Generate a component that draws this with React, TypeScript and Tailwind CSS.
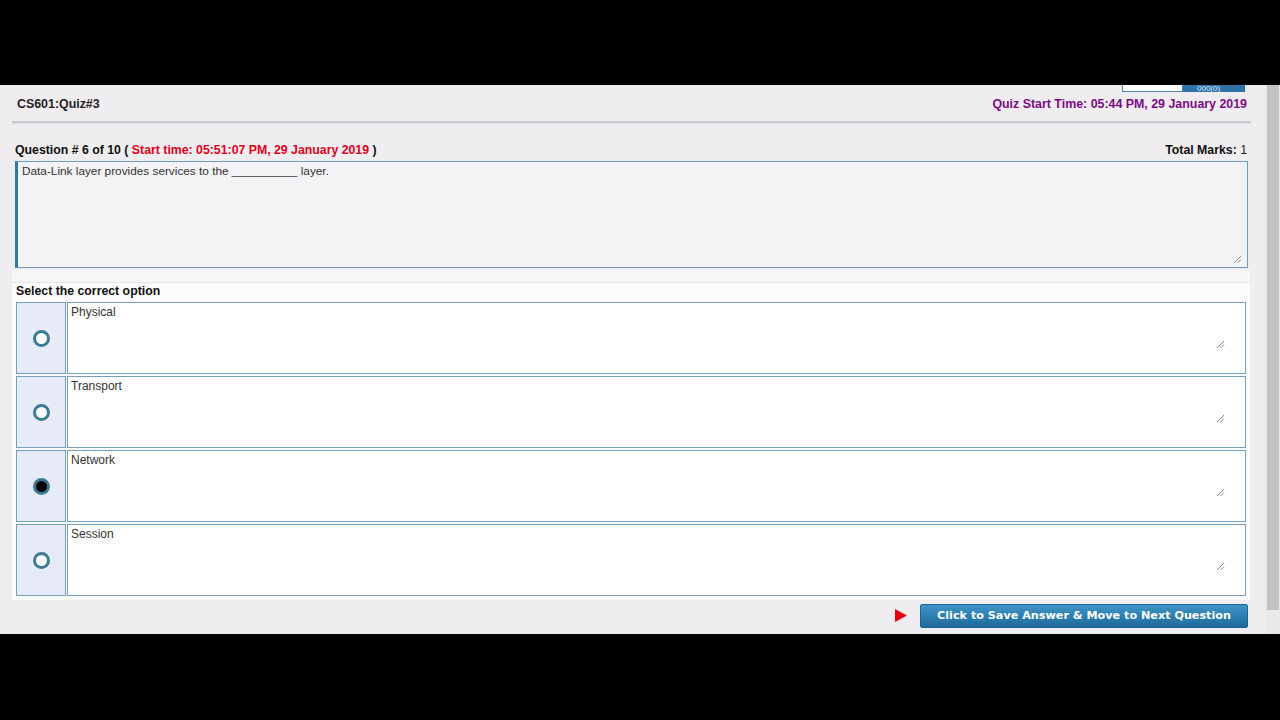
import React from "react";

const options = [
  { label: "Physical", selected: false },
  { label: "Transport", selected: false },
  { label: "Network", selected: true },
  { label: "Session", selected: false },
];

function Grip() {
  return (
    <svg width="9" height="9" viewBox="0 0 9 9" className="absolute right-[20px] bottom-[24px]">
      <line x1="1" y1="8" x2="8" y2="1" stroke="#8a8a8a" strokeWidth="1" />
      <line x1="4.5" y1="8" x2="8" y2="4.5" stroke="#8a8a8a" strokeWidth="1" />
    </svg>
  );
}

export default function App() {
  return (
    <div
      className="w-[1280px] h-[720px] flex flex-col bg-black overflow-hidden text-[12px] text-[#222]"
      style={{ fontFamily: '"Liberation Sans", Arial, sans-serif' }}
    >
      <div className="h-[85px] bg-black" />
      <div className="h-[549px] flex bg-[#efedf0]">
        <div className="flex-1 flex flex-col">
          {/* top boxes */}
          <div className="h-[7px] flex justify-end pr-[20px]">
            <div className="w-[61px] h-[7px] bg-white border border-t-0 border-[#4f86b0]" />
            <div className="w-[62px] h-[7px] bg-[#2f73a8] text-[#d8e6f2] text-[8px] leading-[7px] overflow-hidden pl-[14px]">
              000(0)
            </div>
          </div>
          {/* header */}
          <div className="h-[24px] flex items-center justify-between pl-[17px] pr-[18px] text-[12.4px]">
            <span className="font-bold text-[#222]">CS601:Quiz#3</span>
            <span className="font-bold text-[#7e0a86]">Quiz Start Time: 05:44 PM, 29 January 2019</span>
          </div>
          <div className="mt-[5px] ml-[12px] mr-[14px] h-[2px] bg-[#c8c7ca] shadow-[0_1px_1px_#e2e1e4]" />
          {/* question row */}
          <div className="mt-[20px] h-[14px] flex items-center justify-between pl-[15px] pr-[18px] leading-[14px] text-[12.3px]">
            <span className="font-bold text-[#111]">
              Question # 6 of 10 ( <span className="text-[#e0001b]">Start time: 05:51:07 PM, 29 January 2019</span> )
            </span>
            <span>
              <span className="font-bold text-[#111]">Total Marks:</span> 1
            </span>
          </div>
          <div className="mt-[4px] ml-[15px] mr-[17px] h-[107px] relative bg-[#f3f2f5] border border-[#6e9dbb] border-l-[3px] border-l-[#2e7aa0] pl-[4px] pt-[2px] leading-[14px] text-[#333] text-[11.8px]">
            Data-Link layer provides services to the __________ layer.
            <svg width="9" height="9" viewBox="0 0 9 9" className="absolute right-[5px] bottom-[3px]">
              <line x1="1" y1="8" x2="8" y2="1" stroke="#8a8a8a" strokeWidth="1" />
              <line x1="4.5" y1="8" x2="8" y2="4.5" stroke="#8a8a8a" strokeWidth="1" />
            </svg>
          </div>
          {/* options container */}
          <div className="mt-[2px] ml-[12px] mr-[15px] h-[12px] bg-[#f7f7f8]" />
          <div className="ml-[12px] mr-[15px] h-[1px] bg-[#e6e5e8]" />
          <div className="ml-[12px] mr-[15px] bg-[#fbfbfc] pl-[4px] pr-[4px] pb-[4px]">
            <div className="h-[17px] flex items-center font-bold text-[#111] text-[12.3px]">Select the correct option</div>
            <div className="mt-[2px] flex flex-col gap-[2px]">
              {options.map((o) => (
                <div key={o.label} className="flex gap-[1px] h-[72px]">
                  <div className="w-[50px] bg-[#e7eaf7] border border-[#76a0ba] flex items-center justify-center">
                    <div
                      className={
                        "w-[17px] h-[17px] rounded-full border-[3px] border-[#3a7b95] " +
                        (o.selected ? "bg-black" : "bg-white")
                      }
                    />
                  </div>
                  <div className="flex-1 relative bg-white border border-[#76a0ba] pl-[3px] pt-[2px] leading-[14px] text-[#333]">
                    {o.label}
                    <Grip />
                  </div>
                </div>
              ))}
            </div>
          </div>
          {/* button row */}
          <div className="mt-[4px] flex items-center justify-end pr-[17px] gap-[13px]">
            <svg width="12" height="13" viewBox="0 0 12 13" className="mb-[2px]">
              <polygon points="0,0 12,6.5 0,13" fill="#e3000f" />
            </svg>
            <button
              className="h-[24px] w-[328px] rounded-[2px] text-white font-bold text-[11.2px] border border-[#1d6594] bg-gradient-to-b from-[#3d95c6] to-[#1e6a9c]"
              style={{ fontFamily: '"DejaVu Sans", Verdana, sans-serif' }}
            >
              Click to Save Answer &amp; Move to Next Question
            </button>
          </div>
        </div>
        {/* scrollbar */}
        <div className="w-[15px] bg-[#e9e8ea] flex flex-col items-center">
          <div className="w-[12px] h-[525px] bg-[#c2c1c4]" />
        </div>
      </div>
      <div className="flex-1 bg-black" />
    </div>
  );
}
